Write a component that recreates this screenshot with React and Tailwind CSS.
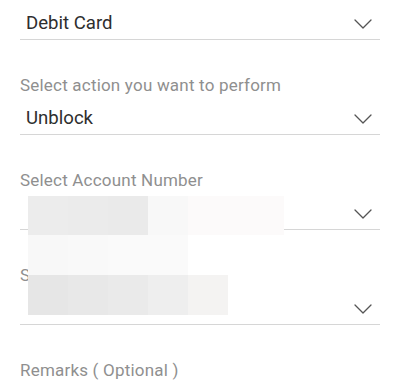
import React from "react";

function Chevron() {
  return (
    <svg width="18" height="10" viewBox="0 0 18 10" className="self-end mb-[10px] shrink-0">
      <polyline points="1,1 9,9 17,1" fill="none" stroke="#555555" strokeWidth="1.3" strokeLinecap="round" strokeLinejoin="round" />
    </svg>
  );
}

function Field({ label, value, select = true, first = false }) {
  return (
    <div className={first ? "" : "mt-[32px]"}>
      {label && (
        <div className="h-6 text-[17px] leading-[27px] tracking-[0.2px] text-[#8f8f8f]">{label}</div>
      )}
      {select && (
        <div className="flex h-[39px] items-center justify-between border-b border-[#d6d6d6] pr-[8px]">
          <span className="mt-[6px] pl-[6px] text-[18.6px] leading-[24px] text-[#2e2e2e]">{value}</span>
          <Chevron />
        </div>
      )}
    </div>
  );
}

export default function App() {
  return (
    <div
      className="relative h-[381px] w-[397px] overflow-hidden bg-white"
      style={{ fontFamily: "Roboto, 'Noto Sans', sans-serif" }}
    >
      <div className="ml-[20px] w-[360px] pt-[1px]">
        <Field first value="Debit Card" />
        <Field label="Select action you want to perform" value="Unblock" />
        <Field label="Select Account Number" value="" />
        <Field label="Select Card Number" value="" />
        <Field label="Remarks ( Optional )" select={false} />
      </div>

      {/* redaction mosaic */}
      <div className="absolute left-[28px] top-[196px] grid grid-cols-[40px_40px_40px_40px_96px] grid-rows-[39px_40px_40px]">
        <div className="bg-[#ececec]" />
        <div className="bg-[#ebebeb]" />
        <div className="bg-[#eaeaea]" />
        <div className="bg-[#f8f8f8]" />
        <div className="bg-[#fcfafa]" />
        <div className="bg-[#f8f8f8]" />
        <div className="bg-[#f9f9f9]" />
        <div className="bg-[#fafafa]" />
        <div className="bg-[#fafafa]" />
        <div className="bg-transparent" />
        <div className="bg-[#e6e6e6]" />
        <div className="bg-[#e8e8e8]" />
        <div className="bg-[#eaeaea]" />
        <div className="bg-[#eeeeee]" />
        <div className="w-[40px] bg-[#f4f3f2]" />
      </div>
    </div>
  );
}
